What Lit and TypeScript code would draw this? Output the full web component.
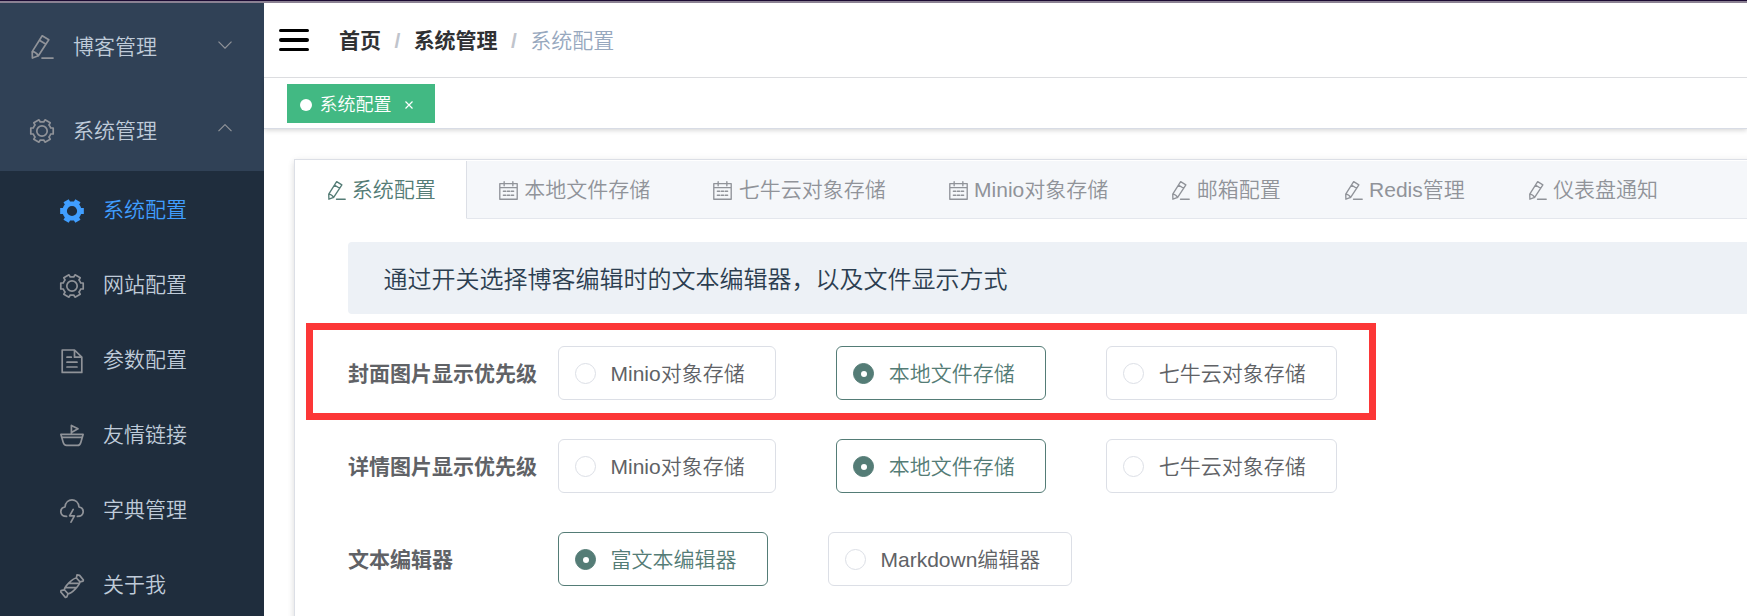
import { LitElement, html, css, svg } from "lit";
import { customElement, property } from "lit/decorators.js";
import { classMap } from "lit/directives/class-map.js";

// Outline of a six-toothed gear centred on (12, 12).
function gear(root: number, tip: number, half: number): string {
  const at = (r: number, deg: number) => {
    const a = (deg * Math.PI) / 180;
    return `${(12 + r * Math.cos(a)).toFixed(2)} ${(12 + r * Math.sin(a)).toFixed(2)}`;
  };
  const spread = (r: number) => (Math.asin(half / r) * 180) / Math.PI;
  const a = spread(root);
  const b = spread(tip);
  let d = "";
  for (let k = 0; k < 6; k++) {
    const c = k * 60;
    d += `${k ? `A${root} ${root} 0 0 1 ` : "M"}${at(root, c - a)}L${at(tip, c - b)}L${at(tip, c + b)}L${at(root, c + a)}`;
  }
  return `${d}A${root} ${root} 0 0 1 ${at(root, 360 - a)}Z`;
}

// Glyphs on a 24 x 24 grid.
const glyphs: Record<string, unknown> = {
  edit: svg`<path d="M12.2 .8 18.8 4.8 8.4 20.8 2.4 23 2.2 16.6Z M9.4 5.2 16 9.2 M2.2 16.6Q5.8 16.6 8.4 20.8 M12 23.1H23"/>`,
  setting: svg`<path d=${gear(9.2, 11.6, 3)}></path><circle cx="12" cy="12" r="5.2"/>`,
  tools: svg`<path fill="currentColor" stroke="none" fill-rule="evenodd" d=${gear(9.6, 12.2, 3) + "M12 6.9a5.1 5.1 0 1 0 0 10.2a5.1 5.1 0 1 0 0-10.2Z"}></path>`,
  document: svg`<path d="M2.2 1H14.5L21.8 8.2V23.4H2.2ZM14.5 1V8.2H21.8M7 8.2H11.3M7 13.2H17M7 18H17"/>`,
  ship: svg`<path d="M11.4 10V1.4L18 4.8 11.4 8.4M.9 10.4H23.1L20.8 18.4Q20 21.4 17.4 21.4H6.6Q4 21.4 3.2 18.4ZM2.5 13.4H21.5"/>`,
  lightning: svg`<path d="M6.6 17.4C-.8 17.4-.8 9 5 8 6-1.4 18-1.4 19 8 24.8 9 24.8 17.4 17.4 17.4M13.2 10.4 9.6 16.8H14.4L11 23.2"/>`,
  candy: svg`<path d="M4.4 15.8C4.4 13 12.4 4.2 16.4 4L20 7.8C19.8 11 12 19.4 8 19.8ZM16.4 4 17 .8 19.6 1.4 23.4 6 23 7.2 20 7.8M4.4 15.8 1 16.6 .8 18 5.4 23.4 6.8 23 8 19.8M9.6 9.4H19M6 13.6H16.6"/>`,
  date: svg`<path d="M1 3.4H23V23H1ZM1 8.4H23M6.5 1V6M17.5 1V6M5.5 13H8.5M10.5 13H13.5M15.5 13H18.5M5.5 18H8.5M10.5 18H13.5M15.5 18H18.5"/>`,
};

@customElement("ui-icon")
export class UiIcon extends LitElement {
  @property() name = "edit";
  static styles = css`
    :host { display: block; flex: none; width: 24px; height: 24px; }
    svg {
      display: block; width: 100%; height: 100%; overflow: visible;
      fill: none; stroke: currentColor; stroke-width: 1.7; stroke-linejoin: round; stroke-linecap: round;
    }
  `;
  render() {
    return html`<svg viewBox="0 0 24 24">${glyphs[this.name]}</svg>`;
  }
}

@customElement("radio-box")
export class RadioBox extends LitElement {
  @property() label = "";
  @property({ type: Boolean }) checked = false;
  static styles = css`
    :host { display: block; flex: none; }
    .box {
      box-sizing: border-box; height: 54px; display: flex; align-items: center;
      border: 1px solid #dcdfe6; border-radius: 6px; padding: 0 30.5px 0 16px;
      color: #606266; white-space: nowrap;
    }
    .dot {
      box-sizing: border-box; width: 21px; height: 21px; margin: 1px 14.5px 0 0;
      border: 1px solid #dcdfe6; border-radius: 50%;
      display: flex; align-items: center; justify-content: center;
    }
    .text { padding-top: 2px; }
    .on { color: #547c76; border-color: #547c76; }
    .on .dot { border-color: #547c76; background: #547c76; }
    .on .dot::after { content: ""; width: 6px; height: 6px; border-radius: 50%; background: #fff; }
  `;
  render() {
    return html`<div class=${classMap({ box: true, on: this.checked })}>
      <span class="dot"></span><span class="text">${this.label}</span>
    </div>`;
  }
}

@customElement("app-root")
export class AppRoot extends LitElement {
  private menu = [
    ["tools", "系统配置"],
    ["setting", "网站配置"],
    ["document", "参数配置"],
    ["ship", "友情链接"],
    ["lightning", "字典管理"],
    ["candy", "关于我"],
  ];
  private tabs = [
    ["edit", "系统配置"],
    ["date", "本地文件存储"],
    ["date", "七牛云对象存储"],
    ["date", "Minio对象存储"],
    ["edit", "邮箱配置"],
    ["edit", "Redis管理"],
    ["edit", "仪表盘通知"],
  ];
  private rows = [
    { label: "封面图片显示优先级", options: ["Minio对象存储", "本地文件存储", "七牛云对象存储"], value: 1 },
    { label: "详情图片显示优先级", options: ["Minio对象存储", "本地文件存储", "七牛云对象存储"], value: 1 },
    { label: "文本编辑器", options: ["富文本编辑器", "Markdown编辑器"], value: 0 },
  ];

  static styles = css`
    :host {
      display: flex; flex-direction: column; position: relative;
      width: 100%; height: 616px; overflow: hidden; background: #fff;
      font: 350 21px/1.2 "Liberation Sans", "Noto Sans CJK SC", sans-serif; color: #606266;
    }
    .strip { flex: none; height: 1px; background: #1c0a33; border-bottom: 2px solid #8b8193; }
    .body { flex: 1; min-height: 0; display: flex; }
    .side { flex: none; width: 264px; background: #304156; color: #bfcbd9; overflow: hidden; }
    .item { height: 84px; box-sizing: border-box; display: flex; align-items: center; padding: 4px 32px 0 30px; }
    .item ui-icon, .sub ui-icon { color: #909399; margin-right: 19px; }
    .item .name { flex: 1; }
    .item .name, .sub .name { margin-top: -1px; }
    .arrow { width: 14px; height: 8px; fill: none; stroke: #909399; stroke-width: 1.2; margin-top: -5px; }
    .arrow.up { margin-top: -7px; }
    .subs { background: #1f2d3d; }
    .sub { height: 75px; box-sizing: border-box; display: flex; align-items: center; padding: 4px 0 0 60px; }
    .sub.active, .sub.active ui-icon { color: #409eff; }
    .main { flex: 1; min-width: 0; display: flex; flex-direction: column; }
    .nav {
      flex: none; height: 75px; box-sizing: border-box; border-bottom: 1px solid #dcdde0;
      display: flex; align-items: center; padding: 0 0 0 15px; position: relative; background: #fff;
    }
    .burger { display: grid; gap: 6px; width: 30px; margin-right: 30px; }
    .burger i { height: 3.3px; border-radius: 2px; background: #000; }
    .crumbs { display: flex; padding-top: 2px; }
    .crumbs b { color: #303133; font-weight: 700; }
    .crumbs .sep { margin: 0 13.4px; color: #c0c4cc; font-weight: 700; }
    .crumbs .last { color: #97a8be; }
    .tags {
      flex: none; height: 51px; box-sizing: border-box; border-bottom: 1px solid #d8dce5;
      box-shadow: 0 1.5px 4.5px rgba(0, 0, 0, .12), 0 0 4.5px rgba(0, 0, 0, .04);
      padding: 6px 0 0 23px;
    }
    .tag {
      width: 148px; height: 39px; box-sizing: border-box; background: #42b983; color: #fff; font-size: 18px;
      display: flex; align-items: center; padding: 2px 0 0 13px;
    }
    .tag .mark { width: 12px; height: 12px; border-radius: 50%; background: #fff; margin-right: 7.5px; }
    .tag .title { padding-top: 2px; }
    .tag svg { width: 8px; height: 8px; margin-left: 13.5px; stroke: #fff; stroke-width: 1.2; }
    .card {
      flex: 1; min-height: 0; margin: 30px -30px -30px 30px; border: 1px solid #dcdfe6;
      box-shadow: 0 3px 6px rgba(0, 0, 0, .12), 0 0 9px rgba(0, 0, 0, .04);
    }
    .tabs { display: flex; height: 58px; margin-top: 1px; background: #f5f7fa; color: #909399; }
    .tab {
      flex: none; box-sizing: border-box; display: flex; align-items: center; white-space: nowrap;
      border-bottom: 1px solid #e4e7ed; padding: 1px 31.6px 0 30.5px; gap: 5.3px;
    }
    .tab.active { background: #fff; color: #547c76; border-right: 1px solid #dcdfe6; border-bottom-color: #fff; padding-right: 30.7px; }
    .tab ui-icon { width: 19px; height: 19px; margin: 0 1px; }
    .rest { flex: 1; border-bottom: 1px solid #e4e7ed; }
    .tip {
      margin: 23px 0 32px 53px; height: 72px; box-sizing: border-box; background: #edf1f6; border-radius: 4px;
      display: flex; align-items: center; padding: 5px 0 0 35.5px; font-size: 24px; color: #2c3e50;
    }
    .row { display: flex; align-items: center; height: 54px; margin: 0 0 39px 53px; }
    .row .label { width: 210px; font-weight: 700; padding-top: 2px; }
    .options { display: flex; gap: 60px; }
    .frame {
      position: absolute; left: 306px; top: 323px; width: 1070px; height: 97px; box-sizing: border-box;
      border: 7px solid #fc3737; pointer-events: none;
    }
  `;

  render() {
    return html`
      <div class="strip"></div>
      <div class="body">
        <aside class="side">
          <div class="item">
            <ui-icon name="edit"></ui-icon><span class="name">博客管理</span>
            <svg class="arrow" viewBox="0 0 14 8"><path d="M.5 .7 7 7.2 13.5 .7" /></svg>
          </div>
          <div class="item">
            <ui-icon name="setting"></ui-icon><span class="name">系统管理</span>
            <svg class="arrow up" viewBox="0 0 14 8"><path d="M.5 7.2 7 .7 13.5 7.2" /></svg>
          </div>
          <div class="subs">
            ${this.menu.map(([icon, name], i) => html`
              <div class=${classMap({ sub: true, active: i === 0 })}>
                <ui-icon name=${icon}></ui-icon><span class="name">${name}</span>
              </div>`)}
          </div>
        </aside>
        <main class="main">
          <div class="nav">
            <div class="burger"><i></i><i></i><i></i></div>
            <div class="crumbs">
              <b>首页</b><span class="sep">/</span><b>系统管理</b><span class="sep">/</span><span class="last">系统配置</span>
            </div>
          </div>
          <div class="tags">
            <div class="tag">
              <span class="mark"></span><span class="title">系统配置</span>
              <svg viewBox="0 0 8 8"><path d="M.5 .5 7.5 7.5M7.5 .5 .5 7.5" /></svg>
            </div>
          </div>
          <section class="card">
            <div class="tabs">
              ${this.tabs.map(([icon, name], i) => html`
                <div class=${classMap({ tab: true, active: i === 0 })}>
                  <ui-icon name=${icon}></ui-icon><span>${name}</span>
                </div>`)}
              <div class="rest"></div>
            </div>
            <div class="tip">通过开关选择博客编辑时的文本编辑器，以及文件显示方式</div>
            ${this.rows.map((row) => html`
              <div class="row">
                <div class="label">${row.label}</div>
                <div class="options">
                  ${row.options.map((o, i) => html`<radio-box label=${o} ?checked=${i === row.value}></radio-box>`)}
                </div>
              </div>`)}
          </section>
        </main>
      </div>
      <div class="frame"></div>
    `;
  }
}
